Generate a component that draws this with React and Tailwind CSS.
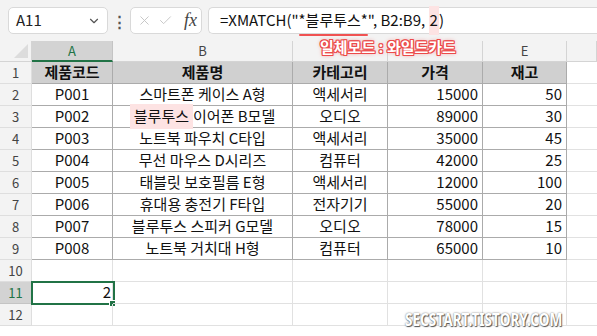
import { FiChevronDown, FiX, FiCheck } from 'react-icons/fi';

// C and D letters sit under the annotation in the screenshot
const COLS = ['A', 'B', '', '', 'E', ''];

const HEADER = ['제품코드', '제품명', '카테고리', '가격', '재고'];

const ROWS = [
  ['P001', '스마트폰 케이스 A형', '액세서리', 15000, 50],
  ['P002', '블루투스 이어폰 B모델', '오디오', 89000, 30],
  ['P003', '노트북 파우치 C타입', '액세서리', 35000, 45],
  ['P004', '무선 마우스 D시리즈', '컴퓨터', 42000, 25],
  ['P005', '태블릿 보호필름 E형', '액세서리', 12000, 100],
  ['P006', '휴대용 충전기 F타입', '전자기기', 55000, 20],
  ['P007', '블루투스 스피커 G모델', '오디오', 78000, 15],
  ['P008', '노트북 거치대 H형', '컴퓨터', 65000, 10],
];

const font = 'font-["Noto_Sans_CJK_KR",sans-serif]';

const ProductName = ({ name, highlight }) => {
  if (!highlight) return name;
  const [head, ...rest] = name.split(' ');
  return (
    <>
      <span className="bg-[#fde3e3] px-[4px] py-[1px]">{head}</span> {rest.join(' ')}
    </>
  );
};

const FormulaBar = () => (
  <div className="h-[41px] bg-[#f3f3f3] flex items-center pl-[8px]">
    <div className="w-[100px] h-[27px] bg-white border border-[#d9d9d9] rounded-[5px] flex items-center justify-between pl-[7px] pr-[6px]">
      <span className="text-[15px] text-[#222]">A11</span>
      <FiChevronDown className="w-[14px] h-[14px] text-[#555]" />
    </div>
    <div className="w-[22px] flex justify-center text-[#555] text-[15px] font-bold leading-none">⋮</div>
    <div className="w-[72px] h-[27px] bg-white border border-[#d9d9d9] rounded-[5px] flex items-center pl-[6px] gap-[6px]">
      <FiX className="w-[15px] h-[15px] text-[#c4c4c4]" strokeWidth={1.5} />
      <FiCheck className="w-[15px] h-[15px] text-[#c4c4c4]" strokeWidth={1.5} />
      <span className='ml-[5px] font-["Liberation_Serif",serif] italic text-[18px] text-[#444]'>fx</span>
    </div>
    <div className="flex-1 ml-[6px] h-[27px] bg-white border border-r-0 border-[#d9d9d9] rounded-l-[5px] flex items-center pl-[11px] text-[15px] text-[#111] whitespace-nowrap">
      <span>=XMATCH(</span>
      <span>"</span>
      <span className="relative">
        *블루투스*
        <span className="absolute left-0 right-0 -bottom-[4px] h-[2px] rounded-full bg-[#f05252]" />
      </span>
      <span>", B2:B9,&nbsp;</span>
      <span className="bg-[#fde3e3] px-[1px] py-[3px]">2</span>
      <span>)</span>
    </div>
  </div>
);

const cellBorder = (inTable) => (inTable ? 'border-[#ababab]' : 'border-[#e1e1e1]');

export default function App() {
  return (
    <div className={`relative w-[597px] h-[336px] overflow-hidden bg-white ${font}`}>
      <FormulaBar />

      <div className="grid grid-cols-[32px_81px_180px_95px_95px_84px_1fr] auto-rows-[22px] grid-rows-[21px]">
        {/* column header row */}
        <div className="relative bg-[#f3f3f3] border-r border-b border-[#d4d4d4] overflow-hidden">
          <div className="absolute right-[3px] bottom-[3px] w-0 h-0 border-l-[14px] border-l-transparent border-b-[14px] border-b-[#dcdcdc]" />
        </div>
        {COLS.map((c, i) => (
          <div
            key={`h${i}`}
            className={
              c === 'A'
                ? 'bg-[#d3d3d3] text-[#217346] border-r border-[#c4c4c4] border-b-2 border-b-[#217346] flex items-center justify-center text-[13px]'
                : 'bg-[#f3f3f3] text-[#444] border-r border-b border-[#d4d4d4] flex items-center justify-center text-[13px]'
            }
          >
            {c}
          </div>
        ))}

        {Array.from({ length: 12 }, (_, r) => {
          const rowNo = r + 1;
          const inTable = rowNo <= 9;
          const selected = rowNo === 11;
          let cells;
          if (rowNo === 1) cells = HEADER;
          else if (inTable) cells = ROWS[rowNo - 2];
          else cells = ['', '', '', '', ''];

          return [
            <div
              key={`r${rowNo}`}
              className={
                selected
                  ? 'bg-[#d3d3d3] text-[#217346] border-r border-b border-[#c4c4c4] flex items-center justify-center text-[13px]'
                  : 'bg-[#f3f3f3] text-[#444] border-r border-b border-[#dedede] flex items-center justify-center text-[13px]'
              }
            >
              {rowNo}
            </div>,
            ...cells.map((v, ci) => {
              const numeric = typeof v === 'number';
              const align = numeric ? 'justify-end pr-[4px]' : 'justify-center';
              const head = rowNo === 1;
              return (
                <div
                  key={`c${rowNo}-${ci}`}
                  className={`relative flex items-center whitespace-nowrap text-[15px] text-[#111] border-r border-b ${cellBorder(
                    inTable
                  )} ${align} ${head ? 'bg-[#d0d0d0] font-bold' : ''}`}
                >
                  {ci === 1 && rowNo === 3 ? <ProductName name={v} highlight /> : v}
                  {selected && ci === 0 && (
                    <>
                      <span className="pr-[1px] ml-auto">2</span>
                      <div className="absolute -left-[1px] -top-[1px] w-[84px] h-[24px] border-2 border-[#217346]" />
                      <div className="absolute -right-[4px] -bottom-[4px] w-[7px] h-[7px] bg-[#217346] border border-white" />
                    </>
                  )}
                </div>
              );
            }),
            <div key={`f${rowNo}`} className="border-b border-[#e1e1e1]" />,
          ];
        })}
      </div>

      {/* annotation */}
      <div className="absolute left-[320px] top-[36px] text-[15px] font-bold text-white [text-shadow:1px_0_0_#ec4a4a,-1px_0_0_#ec4a4a,0_1px_0_#ec4a4a,0_-1px_0_#ec4a4a,1px_1px_0_#ec4a4a,-1px_-1px_0_#ec4a4a,1px_-1px_0_#ec4a4a,-1px_1px_0_#ec4a4a,0_0_4px_#f06464]">
        일체모드 : 와일드카드
      </div>

      {/* watermark */}
      <div className='absolute left-[405px] top-[307px] origin-left scale-x-[0.8] font-["Noto_Sans",sans-serif] font-bold text-[17px] text-white whitespace-nowrap [text-shadow:1px_1px_1px_#555,0_0_2px_#666]'>
        SECSTART.TISTORY.COM
      </div>
    </div>
  );
}
